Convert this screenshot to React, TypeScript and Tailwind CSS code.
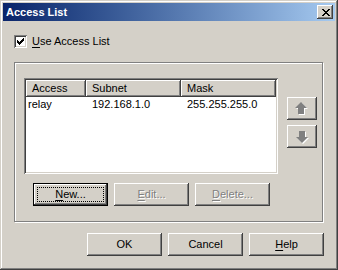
import React from "react";

const raised =
  "shadow-[inset_-1px_-1px_0_#404040,inset_1px_1px_0_#ffffff,inset_-2px_-2px_0_#808080,inset_2px_2px_0_#d4d0c8]";
const sunken =
  "shadow-[inset_1px_1px_0_#808080,inset_-1px_-1px_0_#ffffff,inset_2px_2px_0_#404040,inset_-2px_-2px_0_#d4d0c8]";

function Btn({
  children,
  disabled,
  isDefault,
}: {
  children: React.ReactNode;
  disabled?: boolean;
  isDefault?: boolean;
}) {
  if (isDefault) {
    return (
      <div className="w-[75px] h-[23px] border border-black bg-[#d4d0c8]">
        <div className="w-full h-full p-[3px] shadow-[inset_-1px_-1px_0_#404040,inset_1px_1px_0_#ffffff,inset_-2px_-2px_0_#808080]">
          <div className="w-full h-full border border-dotted border-black flex items-center justify-center leading-[13px]">
            {children}
          </div>
        </div>
      </div>
    );
  }
  return (
    <div
      className={`w-[75px] h-[23px] bg-[#d4d0c8] flex items-center justify-center leading-[13px] ${raised} ${
        disabled ? "text-[#808080] [text-shadow:1px_1px_0_#ffffff]" : "text-black"
      }`}
    >
      {children}
    </div>
  );
}

function Arrow({ down }: { down?: boolean }) {
  const pts = "6,0 12,6 9,6 9,12 3,12 3,6 0,6";
  return (
    <svg width="14" height="14" viewBox="0 0 14 14" className={down ? "rotate-180" : ""}>
      <polygon points={pts} fill="#ffffff" transform={down ? "translate(0 0)" : "translate(1 1)"} />
      <polygon points={pts} fill="#808080" transform={down ? "translate(1 1)" : "translate(0 0)"} />
    </svg>
  );
}

function CheckMark() {
  const cols = [2, 3, 4, 3, 2, 1, 0];
  return (
    <svg width="7" height="7" viewBox="0 0 7 7" shapeRendering="crispEdges">
      {cols.map((y, x) => (
        <rect key={x} x={x} y={y} width="1" height="3" fill="#000" />
      ))}
    </svg>
  );
}

function CloseX() {
  const rows = [
    [0, 1, 6, 7],
    [1, 2, 5, 6],
    [2, 3, 4, 5],
    [3, 4],
    [2, 3, 4, 5],
    [1, 2, 5, 6],
    [0, 1, 6, 7],
  ];
  return (
    <svg width="8" height="7" viewBox="0 0 8 7" shapeRendering="crispEdges">
      {rows.map((r, y) =>
        r.map((x) => <rect key={`${x}-${y}`} x={x} y={y} width="1" height="1" fill="#000" />)
      )}
    </svg>
  );
}

export default function App() {
  return (
    <div className="w-[338px] h-[270px] bg-[#d4d0c8] p-[3px] flex flex-col font-['Liberation_Sans',Arial,sans-serif] text-[11px] text-black shadow-[inset_-1px_-1px_0_#404040,inset_1px_1px_0_#d4d0c8,inset_-2px_-2px_0_#808080,inset_2px_2px_0_#ffffff]">
      {/* Title bar */}
      <div className="h-[18px] flex items-center bg-gradient-to-r from-[#0a246a] to-[#a6caf0] pl-[3px] pr-[2px]">
        <span className="flex-1 font-bold text-white leading-[13px]">Access List</span>
        <div className={`w-[16px] h-[14px] bg-[#d4d0c8] flex items-center justify-center pl-[1px] ${raised}`}>
          <CloseX />
        </div>
      </div>

      <div className="flex flex-col pl-[11px] pt-[14px]">
        {/* Checkbox */}
        <div className="flex items-center h-[13px] gap-[5px]">
          <div className={`w-[13px] h-[13px] bg-white flex items-center justify-center ${sunken}`}>
            <CheckMark />
          </div>
          <span className="leading-[13px]">
            <span className="underline underline-offset-[2px]">U</span>se Access List
          </span>
        </div>

        {/* Group box */}
        <div className="mt-[14px] w-[309px] h-[160px] border border-[#808080] shadow-[1px_1px_0_#ffffff,inset_1px_1px_0_#ffffff] pl-[9px] pt-[15px] flex flex-col">
          <div className="flex">
            {/* List view */}
            <div className={`w-[254px] h-[96px] bg-white p-[2px] ${sunken}`}>
              <div className="flex h-[17px] bg-[#d4d0c8]">
                {[
                  ["Access", "w-[60px]"],
                  ["Subnet", "w-[95px]"],
                  ["Mask", "w-[95px]"],
                ].map(([label, w]) => (
                  <div
                    key={label}
                    className={`${w} h-full pl-[6px] flex items-center leading-[13px] shadow-[inset_-1px_-1px_0_#404040,inset_1px_1px_0_#ffffff,inset_-2px_-2px_0_#808080]`}
                  >
                    {label}
                  </div>
                ))}
              </div>
              <div className="flex h-[14px] items-center leading-[13px]">
                <div className="w-[60px] pl-[2px]">relay</div>
                <div className="w-[95px] pl-[6px]">192.168.1.0</div>
                <div className="w-[95px] pl-[6px]">255.255.255.0</div>
              </div>
            </div>

            {/* Move buttons */}
            <div className="ml-[9px] mt-[19px] flex flex-col gap-[5px]">
              <div className={`w-[30px] h-[23px] bg-[#d4d0c8] flex items-center justify-center ${raised}`}>
                <Arrow />
              </div>
              <div className={`w-[30px] h-[23px] bg-[#d4d0c8] flex items-center justify-center ${raised}`}>
                <Arrow down />
              </div>
            </div>
          </div>

          <div className="flex gap-[6px] mt-[9px] pl-[9px]">
            <Btn isDefault>
              <span>
                <span className="underline underline-offset-[2px]">N</span>ew...
              </span>
            </Btn>
            <Btn disabled>
              <span>
                <span className="underline underline-offset-[2px]">E</span>dit...
              </span>
            </Btn>
            <Btn disabled>
              <span>
                <span className="underline underline-offset-[2px]">D</span>elete...
              </span>
            </Btn>
          </div>
        </div>

        {/* Dialog buttons */}
        <div className="mt-[11px] w-[310px] flex justify-end gap-[6px]">
          <Btn>OK</Btn>
          <Btn>Cancel</Btn>
          <Btn>
            <span>
              <span className="underline underline-offset-[2px]">H</span>elp
            </span>
          </Btn>
        </div>
      </div>
    </div>
  );
}
